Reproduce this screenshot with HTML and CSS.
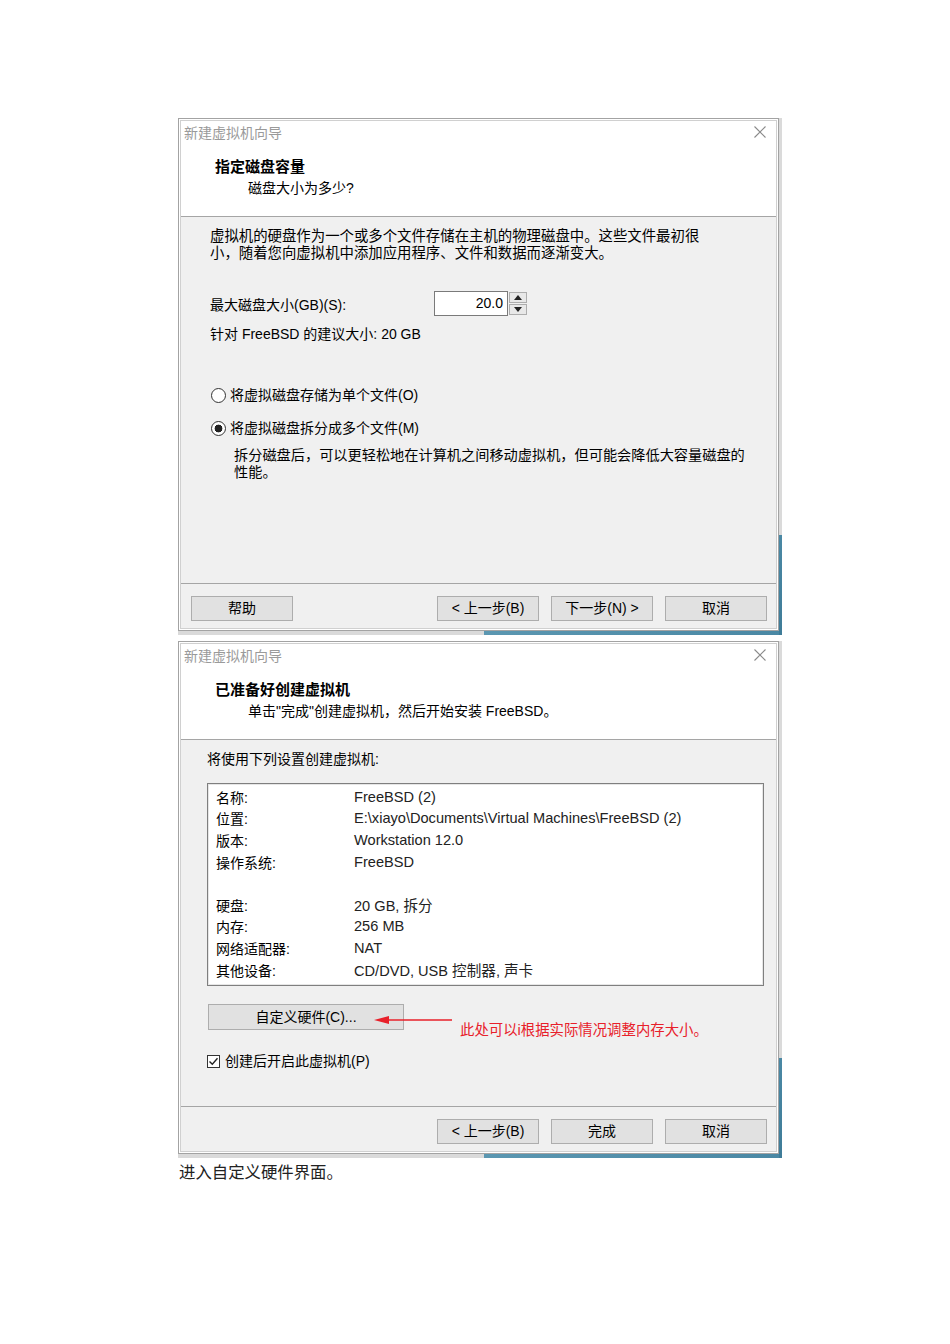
FILE: index.html
```html
<!DOCTYPE html>
<html lang="zh-CN">
<head>
    <meta charset="UTF-8">
    <title>新建虚拟机向导</title>
    <link rel="stylesheet" href="styles.css">
</head>
<body>
    <div class="page">
        <!-- step: disk capacity -->
        <div class="shot">
            <div class="dialog">
                <div class="win">
                    <div class="head">
                        <div class="titlebar">
                            <span class="title">新建虚拟机向导</span>
                            <svg class="close" width="12" height="12" viewBox="0 0 12 12"><path d="M0.5 0.5 L11.5 11.5 M11.5 0.5 L0.5 11.5" stroke="#8a8a8a" stroke-width="1.1" fill="none"/></svg>
                        </div>
                        <div class="heading">指定磁盘容量</div>
                        <div class="sub">磁盘大小为多少?</div>
                    </div>
                    <div class="body">
                        <div class="para">虚拟机的硬盘作为一个或多个文件存储在主机的物理磁盘中。这些文件最初很<br>小，随着您向虚拟机中添加应用程序、文件和数据而逐渐变大。</div>
                        <div class="size-row">
                            <span class="size-label">最大磁盘大小(GB)(S):</span>
                            <span class="spin-input">20.0</span>
                            <span class="spin-btns">
                                <span class="spin-btn"><svg width="8" height="5" viewBox="0 0 8 5"><path d="M0 5 L4 0 L8 5 Z" fill="#222"/></svg></span>
                                <span class="spin-btn"><svg width="8" height="5" viewBox="0 0 8 5"><path d="M0 0 L8 0 L4 5 Z" fill="#222"/></svg></span>
                            </span>
                        </div>
                        <div class="hint">针对 FreeBSD 的建议大小: 20 GB</div>
                        <div class="radio-row first"><span class="radio"></span>将虚拟磁盘存储为单个文件(O)</div>
                        <div class="radio-row"><span class="radio on"></span>将虚拟磁盘拆分成多个文件(M)</div>
                        <div class="desc">拆分磁盘后，可以更轻松地在计算机之间移动虚拟机，但可能会降低大容量磁盘的<br>性能。</div>
                    </div>
                    <div class="foot">
                        <span class="btn">帮助</span>
                        <div class="btn-group">
                            <span class="btn">&lt; 上一步(B)</span>
                            <span class="btn">下一步(N) &gt;</span>
                            <span class="btn">取消</span>
                        </div>
                    </div>
                </div>
            </div>
        </div>

        <!-- step: ready to create -->
        <div class="shot second">
            <div class="dialog">
                <div class="win">
                    <div class="head">
                        <div class="titlebar">
                            <span class="title">新建虚拟机向导</span>
                            <svg class="close" width="12" height="12" viewBox="0 0 12 12"><path d="M0.5 0.5 L11.5 11.5 M11.5 0.5 L0.5 11.5" stroke="#8a8a8a" stroke-width="1.1" fill="none"/></svg>
                        </div>
                        <div class="heading">已准备好创建虚拟机</div>
                        <div class="sub">单击"完成"创建虚拟机，然后开始安装 FreeBSD。</div>
                    </div>
                    <div class="body body-ready">
                        <div class="intro">将使用下列设置创建虚拟机:</div>
                        <div class="summary">
                            <span>名称:</span><span>FreeBSD (2)</span>
                            <span>位置:</span><span>E:\xiayo\Documents\Virtual Machines\FreeBSD (2)</span>
                            <span>版本:</span><span>Workstation 12.0</span>
                            <span>操作系统:</span><span>FreeBSD</span>
                            <span class="blank"></span><span class="blank"></span>
                            <span>硬盘:</span><span>20 GB, 拆分</span>
                            <span>内存:</span><span>256 MB</span>
                            <span>网络适配器:</span><span>NAT</span>
                            <span>其他设备:</span><span>CD/DVD, USB 控制器, 声卡</span>
                        </div>
                        <div class="custom-row">
                            <span class="btn custom-btn">自定义硬件(C)...</span>
                            <svg class="arrow" width="80" height="10" viewBox="0 0 80 10"><path d="M0 5 L15 1 L15 9 Z" fill="#e8202a"/><path d="M12 5 L78 5" stroke="#e8202a" stroke-width="1.3"/></svg>
                            <span class="note">此处可以i根据实际情况调整内存大小。</span>
                        </div>
                        <div class="check-row">
                            <span class="checkbox"><svg width="11" height="11" viewBox="0 0 11 11"><path d="M1.5 5.5 L4.3 8.3 L9.5 2.3" stroke="#222" stroke-width="1.4" fill="none"/></svg></span>创建后开启此虚拟机(P)
                        </div>
                    </div>
                    <div class="foot end">
                        <div class="btn-group">
                            <span class="btn">&lt; 上一步(B)</span>
                            <span class="btn">完成</span>
                            <span class="btn">取消</span>
                        </div>
                    </div>
                </div>
            </div>
        </div>

        <p class="caption">进入自定义硬件界面。</p>
    </div>
</body>
</html>
```

FILE: styles.css
```css
* { box-sizing: border-box; }
:root {
    --face: #f0f0f0; --line: #a5a5a5; --btn: #e1e1e1; --btn-border: #adadad;
    --desk: #4a88a4; --muted: #9a9a9a;
}
body {
    margin: 0; background: #fff; color: #000;
    font-family: "Liberation Sans", "Noto Sans CJK SC", sans-serif; font-size: 14px;
}
.page { padding: 118px 0 40px 178px; }

/* screenshot frame with the desktop peeking out bottom-right */
.shot {
    width: 604px; padding: 0 3px 4px 0;
    background:
        linear-gradient(var(--desk), #3f7c98) right bottom / 3px 100px no-repeat,
        linear-gradient(90deg, #5b97b1, var(--desk)) right bottom / 298px 4px no-repeat,
        #dadada;
}
.shot.second { margin-top: 6px; }
.dialog { border: 1px solid #a3a3a3; padding: 1px; background: #fff; }
.win { border: 1px solid #d0d0d0; }

.head { height: 96px; background: #fff; border-bottom: 1px solid var(--line); }
.titlebar {
    height: 22px; display: flex; align-items: center;
    justify-content: space-between; padding: 0 10px 0 3px;
}
.title { color: var(--muted); font-size: 14px; }
.close { display: block; }
.heading { margin: 14px 0 0 34px; font-weight: bold; font-size: 15px; line-height: 20px; }
.sub { margin: 1px 0 0 67px; line-height: 20px; }

.body {
    height: 367px; background: var(--face); border-bottom: 1px solid var(--line);
    padding: 11px 0 0 29px;
}
.para { line-height: 17px; font-size: 14.4px; white-space: nowrap; }
.size-row { margin-top: 29px; display: flex; align-items: center; height: 25px; }
.size-label { width: 224px; }
.spin-input {
    width: 74px; height: 25px; border: 1px solid #7a7a7a; background: #fff;
    text-align: right; padding-right: 4px; line-height: 23px;
}
.spin-btns { display: flex; flex-direction: column; gap: 1px; margin-left: 1px; }
.spin-btn {
    width: 18px; height: 11px; border: 1px solid var(--btn-border); background: #e8e8e8;
    display: flex; align-items: center; justify-content: center;
}
.hint { margin-top: 9px; line-height: 18px; }
.radio-row { display: flex; align-items: center; gap: 4px; line-height: 20px; margin-top: 13px; }
.radio-row.first { margin-top: 42px; }
.radio {
    width: 15px; height: 15px; border-radius: 50%; margin-left: 1px;
    border: 1px solid #333; background: #fff;
}
.radio.on { background: radial-gradient(circle, #222 0 3.6px, #fff 4.2px); }
.desc { margin: 9px 0 0 24px; line-height: 17px; font-size: 14.2px; white-space: nowrap; }

.foot {
    height: 44px; background: var(--face); display: flex;
    justify-content: space-between; padding: 12px 9px 0 10px;
}
.foot.end { justify-content: flex-end; }
.btn-group { display: flex; gap: 12px; }
.btn {
    display: block; width: 102px; height: 25px; border: 1px solid var(--btn-border);
    background: var(--btn); text-align: center; line-height: 23px; font-size: 14px;
}

.body-ready { padding: 10px 0 0 26px; }
.intro { line-height: 18px; }
.summary {
    margin-top: 15px; width: 557px; height: 203px; background: #fff;
    border: 1px solid #7f7f7f; box-shadow: inset 0 0 0 1px #e6e6e6;
    padding: 2px 0 0 8px;
    display: grid; grid-template-columns: 138px 1fr; grid-auto-rows: 21.6px;
    align-items: center;
}
.summary span:nth-child(even) { color: #222; font-size: 14.6px; }
.custom-row { position: relative; margin-top: 18px; height: 26px; display: flex; }
.custom-btn { width: 196px; height: 26px; line-height: 24px; margin-left: 1px; }
.arrow { position: absolute; left: 167px; top: 11px; }
.note { color: #e8202a; margin: 17px 0 0 56px; line-height: 18px; font-size: 14.4px; white-space: nowrap; }
.check-row { margin-top: 21px; display: flex; align-items: center; gap: 5px; line-height: 20px; }
.checkbox {
    width: 13px; height: 13px; border: 1px solid #333; background: #fff;
    display: flex; align-items: center; justify-content: center;
}

.caption {
    margin: 5px 0 0 1px; font-family: "Liberation Serif", "Noto Sans CJK SC", serif;
    font-size: 16.4px; line-height: 20px; color: #222;
}
```
